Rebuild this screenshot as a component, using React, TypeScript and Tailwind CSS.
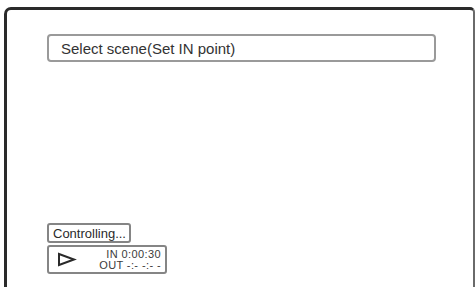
import React from "react";

export default function App() {
  return (
    <div className="w-[476px] h-[287px] bg-white overflow-hidden pt-[7px] pl-[4px]" style={{ fontFamily: '"Liberation Sans", Arial, sans-serif' }}>
      <div className="w-[471px] h-[300px] border-t-[3px] border-l-[3px] border-r-2 border-t-[#2a2a2a] border-l-[#2a2a2a] border-r-[#6a6a6a] rounded-tl-[7px] rounded-tr-[5px] pl-[40px] pt-[24px] flex flex-col">
        <div className="w-[389px] h-[28px] border-2 border-[#9a9a9a] rounded-[4px] flex items-center pl-[12px] text-[15px] text-[#333333] leading-none">
          Select scene(Set IN point)
        </div>
        <div className="mt-[161px] w-[84px] h-[20px] border-2 border-[#858585] rounded-[3px] flex items-center pl-[4px] text-[13px] text-[#2a2a2a] leading-none whitespace-nowrap">
          Controlling...
        </div>
        <div className="mt-[2px] w-[120px] h-[29px] border-2 border-[#858585] rounded-[3px] flex items-center pl-[8px] pr-[4px]">
          <svg width="20" height="15" viewBox="0 0 20 15" className="shrink-0">
            <path d="M2 2 L17 7.5 L2 13 Z" fill="none" stroke="#2a2a2a" strokeWidth="2" strokeLinejoin="miter" />
          </svg>
          <div className="ml-auto flex flex-col items-end text-[11px] leading-[11px] text-[#3a3a3a] tracking-[0.4px] whitespace-pre">
            <span>IN 0:00:30</span>
            <span>OUT -:- -:- -</span>
          </div>
        </div>
      </div>
    </div>
  );
}
